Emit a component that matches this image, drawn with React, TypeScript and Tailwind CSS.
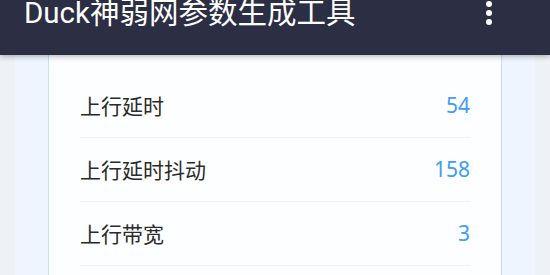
import React from 'react';

const rows = [
  { label: '上行延时', value: '54' },
  { label: '上行延时抖动', value: '158' },
  { label: '上行带宽', value: '3' },
];

export default function App() {
  return (
    <div
      className="relative h-[275px] w-[550px] overflow-hidden bg-[#eef1f5]"
      style={{ fontFamily: '"Noto Sans", Roboto, "Noto Sans CJK SC", sans-serif' }}
    >
      {/* top bar */}
      <header className="absolute left-0 right-0 top-0 z-10 flex h-[55px] items-start justify-between bg-[#2c2e43] pl-[24px] pr-[58px] shadow-[0_2px_5px_rgba(0,0,0,0.25)]">
        <h1
          className="mt-[-3px] text-[29.5px] leading-[32px] text-white"
          style={{ fontFamily: 'Roboto, "Noto Sans CJK SC", sans-serif' }}
        >
          Duck神弱网参数生成工具
        </h1>
        <div className="mt-[1px] flex flex-col gap-[3px]">
          <span className="h-[6px] w-[6px] rounded-full bg-white" />
          <span className="h-[6px] w-[6px] rounded-full bg-white" />
          <span className="h-[6px] w-[6px] rounded-full bg-white" />
        </div>
      </header>

      {/* content */}
      <div className="flex h-full px-[15px]">
        <div className="flex flex-1 bg-[#eef5fe] px-[33px]">
          <div className="flex-1 border-x border-[#c6e0fb] bg-[#fdfeff] px-[31px] pt-[74px]">
            {rows.map((r) => (
              <div
                key={r.label}
                className="flex h-[64px] items-center justify-between border-b border-[#edf3fb]"
              >
                <span
                  className="text-[21px] text-[#2b2b2b]"
                  style={{ fontFamily: '"Noto Sans CJK SC", sans-serif' }}
                >
                  {r.label}
                </span>
                <span className="text-[21px] text-[#3f9cf8]">{r.value}</span>
              </div>
            ))}
          </div>
        </div>
      </div>
    </div>
  );
}
